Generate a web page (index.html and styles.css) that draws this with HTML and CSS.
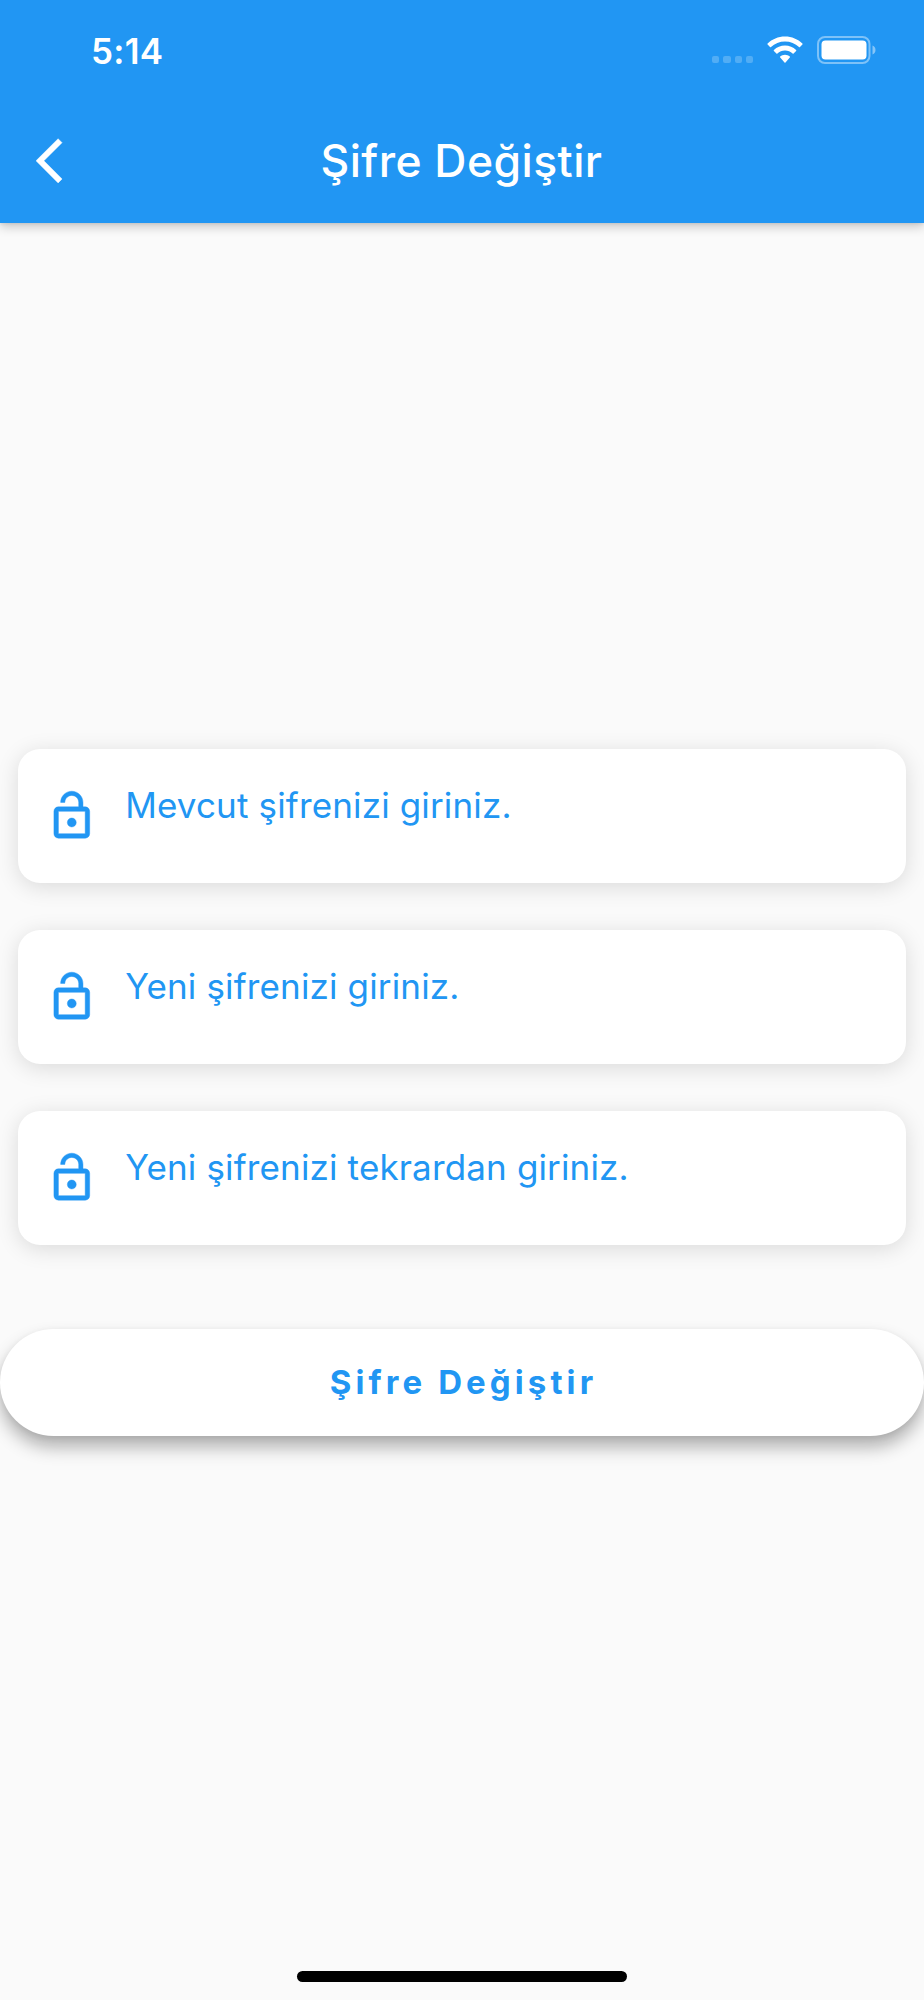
FILE: index.html
```html
<!DOCTYPE html>
<html lang="tr">
<head>
    <meta charset="UTF-8">
    <meta name="viewport" content="width=device-width, initial-scale=1.0">
    <title>Şifre Değiştir</title>
    <link rel="stylesheet" href="styles.css">
</head>
<body>
    <div class="screen">
        <!-- Header with status bar -->
        <header>
            <div class="status-bar">
                <span class="time">5:14</span>
                <div class="status-icons">
                    <div class="signal"><i></i><i></i><i></i><i></i></div>
                    <svg class="wifi" viewBox="0 0 36 28">
                        <path d="M18 0.6C24.8 0.6 31 3.3 35.4 7.6q.5.5 0 1l-2.4 2.5q-.5.5-1 0C28.3 7.600 23.400 5.600 18 5.600S7.700 7.600 4 11.100q-.5.5-1 0L.6 8.600q-.5-.5 0-1C5 3.300 11.200.6 18 .6z"/>
                        <path d="M18 9.500c4.300 0 8.200 1.700 11.100 4.400q.5.500 0 1l-2.500 2.500q-.5.5-1 0C23.600 15.500 20.900 14.400 18 14.400s-5.600 1.100-7.600 3q-.5.5-1 0l-2.500-2.500q-.5-.5 0-1C9.800 11.200 13.700 9.500 18 9.500z"/>
                        <path d="M18 18.700c1.800 0 3.500.7 4.800 1.800q.5.500 0 1l-4.300 4.900q-.5.5-1 0l-4.300-4.900q-.5-.5 0-1c1.300-1.100 3-1.800 4.800-1.800z"/>
                    </svg>
                    <svg class="battery" viewBox="0 0 60 28">
                        <rect class="battery-case" x="1" y="1" width="51.500" height="26" rx="7"/>
                        <rect x="4.500" y="4.500" width="45" height="19" rx="4"/>
                        <path class="battery-cap" d="M55.500 9.500c2 .8 3 2.500 3 4.500s-1 3.700-3 4.500z"/>
                    </svg>
                </div>
            </div>
            <div class="app-bar">
                <svg class="back" viewBox="0 0 24 24"><path d="M11.670 3.870L9.900 2.100 0 12l9.900 9.900 1.770-1.770L3.540 12z"/></svg>
                <h1>Şifre Değiştir</h1>
            </div>
        </header>

        <!-- Password form -->
        <main>
            <div class="field">
                <svg class="lock" viewBox="0 0 24 24"><path d="M12 17c1.100 0 2-.9 2-2s-.9-2-2-2-2 .9-2 2 .9 2 2 2zm6-9h-1V6c0-2.760-2.240-5-5-5S7 3.240 7 6h1.900c0-1.710 1.390-3.100 3.100-3.100s3.100 1.390 3.100 3.100v2H6c-1.100 0-2 .9-2 2v10c0 1.100.9 2 2 2h12c1.100 0 2-.9 2-2V10c0-1.100-.9-2-2-2zm0 12H6V10h12v10z"/></svg>
                <span>Mevcut şifrenizi giriniz.</span>
            </div>
            <div class="field">
                <svg class="lock" viewBox="0 0 24 24"><path d="M12 17c1.100 0 2-.9 2-2s-.9-2-2-2-2 .9-2 2 .9 2 2 2zm6-9h-1V6c0-2.760-2.240-5-5-5S7 3.240 7 6h1.900c0-1.710 1.390-3.100 3.100-3.100s3.100 1.390 3.100 3.100v2H6c-1.100 0-2 .9-2 2v10c0 1.100.9 2 2 2h12c1.100 0 2-.9 2-2V10c0-1.100-.9-2-2-2zm0 12H6V10h12v10z"/></svg>
                <span>Yeni şifrenizi giriniz.</span>
            </div>
            <div class="field">
                <svg class="lock" viewBox="0 0 24 24"><path d="M12 17c1.100 0 2-.9 2-2s-.9-2-2-2-2 .9-2 2 .9 2 2 2zm6-9h-1V6c0-2.760-2.240-5-5-5S7 3.240 7 6h1.900c0-1.710 1.390-3.100 3.100-3.100s3.100 1.390 3.100 3.100v2H6c-1.100 0-2 .9-2 2v10c0 1.100.9 2 2 2h12c1.100 0 2-.9 2-2V10c0-1.100-.9-2-2-2zm0 12H6V10h12v10z"/></svg>
                <span>Yeni şifrenizi tekrardan giriniz.</span>
            </div>
            <button class="submit-button">Şifre Değiştir</button>
        </main>

        <div class="home-indicator"></div>
    </div>
</body>
</html>
```
FILE: styles.css
```css
/* Global styles */
* {
    box-sizing: border-box;
}
body {
    margin: 0;
    font-family: Inter, "Liberation Sans", sans-serif;
    background-color: #fafafa;
    color: #2196f3;
}
svg {
    display: block;
    fill: currentColor;
    flex-shrink: 0;
}
.screen {
    display: flex;
    flex-direction: column;
    height: 2000px;
    overflow: hidden;
}

/* Header styles */
header {
    height: 223px;
    background-color: #2196f3;
    color: white;
    box-shadow: 0 4px 10px rgba(0,0,0,0.2), 0 1px 3px rgba(0,0,0,0.08);
}
.status-bar {
    display: flex;
    justify-content: space-between;
    height: 98px;
    padding: 30px 47px 0 91px;
}
.time {
    font-size: 35px;
    font-weight: 600;
    line-height: 42px;
    letter-spacing: 0.3px;
}
.status-icons {
    display: flex;
    align-items: flex-start;
    padding-top: 6px;
}
.signal {
    display: flex;
    gap: 4px;
    margin: 20px 14px 0 0;
}
.signal i {
    width: 7.2px;
    height: 7.2px;
    border-radius: 2px;
    background-color: rgba(255,255,255,0.22);
}
.wifi {
    width: 36px;
    height: 28px;
    margin-right: 14px;
}
.battery {
    width: 60px;
    height: 28px;
}
.battery-case {
    fill: none;
    stroke: rgba(255,255,255,0.42);
    stroke-width: 2;
}
.battery-cap {
    fill: rgba(255,255,255,0.45);
}
.app-bar {
    display: grid;
    grid-template-columns: 54px 1fr 55px;
    align-items: center;
    height: 125px;
    padding: 0 36px;
}
.back {
    width: 53.6px;
    height: 53.6px;
}
.back,
.lock {
    stroke: currentColor;
    stroke-width: 0.2px;
}
h1 {
    margin: 0;
    font-size: 44.5px;
    font-weight: 500;
    line-height: 52px;
    letter-spacing: 0.45px;
    text-align: center;
    white-space: nowrap;
}

/* Form styles */
main {
    flex: 1;
    padding-top: 526px;
}
.field {
    display: flex;
    height: 134px;
    margin: 0 18px 47px;
    padding: 35px 27px 0 26.6px;
    background-color: white;
    border-radius: 22px;
    box-shadow: 0 4px 22px rgba(0,0,0,0.13);
}
.field span {
    margin-left: 27px;
    font-size: 35px;
    line-height: 43px;
    letter-spacing: 0.15px;
    white-space: nowrap;
}
.lock {
    width: 53.6px;
    height: 53.6px;
    margin-top: 5.3px;
}
.submit-button {
    display: block;
    width: 100%;
    height: 107px;
    margin-top: 84px;
    padding: 0 0 2px 3px;
    border: none;
    border-radius: 54px;
    background-color: white;
    color: #2196f3;
    font-family: inherit;
    font-size: 33px;
    font-weight: 700;
    letter-spacing: 4.1px;
    box-shadow: 0 11px 18px rgba(0,0,0,0.3), 0 2px 6px rgba(0,0,0,0.06);
}

/* Home indicator */
.home-indicator {
    width: 330px;
    height: 11px;
    margin: 0 auto 18px;
    border-radius: 6px;
    background-color: black;
}
```
